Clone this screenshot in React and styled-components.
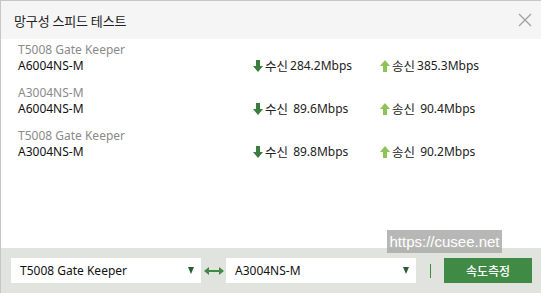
import React from "react";
import styled, { createGlobalStyle } from "styled-components";

const GlobalStyle = createGlobalStyle`
  html, body {
    margin: 0;
    padding: 0;
    background: #ffffff;
  }
  body {
    font-family: "Noto Sans", "Noto Sans CJK KR", sans-serif;
  }
`;

const Dialog = styled.div`
  position: relative;
  width: 541px;
  height: 293px;
  box-sizing: border-box;
  border-top: 1px solid #c6c6c6;
  border-left: 1px solid #c6c6c6;
  display: flex;
  flex-direction: column;
  background: #ffffff;
  overflow: hidden;
`;

const Header = styled.header`
  height: 38px;
  flex: none;
  background: #f5f5f5;
  display: flex;
  align-items: center;
  justify-content: space-between;
  padding: 0 8px 0 13px;
`;

const Title = styled.h1`
  margin: 0;
  font-size: 13px;
  font-weight: 400;
  color: #222;
  font-family: "Noto Sans CJK KR", sans-serif;
  letter-spacing: -0.1px;
`;

const CloseButton = styled.button`
  border: 0;
  background: transparent;
  padding: 0;
  width: 16px;
  height: 16px;
  display: flex;
  cursor: pointer;
`;

const Body = styled.main`
  flex: 1;
  padding: 3px 0 0 17px;
  display: flex;
  flex-direction: column;
  gap: 11px;
`;

const Row = styled.div`
  display: grid;
  grid-template-columns: 235px 127px auto;
  grid-template-rows: 16px 16px;
  font-size: 12px;
  line-height: 16px;
`;

const Source = styled.div`
  grid-column: 1 / 4;
  color: #8a8a8a;
`;

const Target = styled.div`
  color: #111;
`;

const Stat = styled.div`
  display: flex;
  align-items: center;
  gap: 2px;
  color: #222;
  white-space: pre;
`;

const Label = styled.span`
  font-family: "Noto Sans CJK KR", sans-serif;
  font-size: 12.5px;
`;

const Footer = styled.footer`
  height: 45px;
  flex: none;
  background: #e1e3de;
  display: flex;
  align-items: center;
  padding: 0 0 0 10px;
`;

const Select = styled.div`
  width: ${({ $width }) => $width}px;
  height: 25px;
  background: #ffffff;
  box-sizing: border-box;
  padding: 0 7px 0 9px;
  display: flex;
  align-items: center;
  justify-content: space-between;
  font-size: 12px;
  color: #111;
`;

const Caret = styled.span`
  width: 0;
  height: 0;
  border-left: 3.5px solid transparent;
  border-right: 3.5px solid transparent;
  border-top: 7px solid #2f5a36;
`;

const Swap = styled.span`
  width: 25px;
  display: flex;
  justify-content: center;
`;

const Divider = styled.span`
  width: 1px;
  height: 14px;
  background: #3f8a45;
  margin: 0 13px 0 14px;
`;

const MeasureButton = styled.button`
  width: 88px;
  height: 25px;
  border: 0;
  background: #3f8a45;
  color: #ffffff;
  font-size: 12px;
  font-family: "Noto Sans CJK KR", sans-serif;
  font-weight: 500;
  cursor: pointer;
`;

const Watermark = styled.div`
  position: absolute;
  left: 386px;
  top: 229px;
  width: 115px;
  height: 23px;
  background: rgba(170, 172, 168, 0.85);
  color: #ffffff;
  font-family: "Liberation Sans", sans-serif;
  font-size: 15px;
  line-height: 23px;
  text-align: center;
`;

const Arrow = ({ up, color }) => (
  <svg width="10" height="12" viewBox="0 0 10 12">
    {up ? (
      <polygon points="5,0 10,6 7,6 7,12 3,12 3,6 0,6" fill={color} />
    ) : (
      <polygon points="3,0 7,0 7,6 10,6 5,12 0,6 3,6" fill={color} />
    )}
  </svg>
);

const rows = [
  { from: "T5008 Gate Keeper", to: "A6004NS-M", down: "284.2Mbps", up: "385.3Mbps" },
  { from: "A3004NS-M", to: "A6004NS-M", down: " 89.6Mbps", up: " 90.4Mbps" },
  { from: "T5008 Gate Keeper", to: "A3004NS-M", down: " 89.8Mbps", up: " 90.2Mbps" },
];

const App = () => (
  <>
    <GlobalStyle />
    <Dialog>
      <Header>
        <Title>망구성 스피드 테스트</Title>
        <CloseButton aria-label="close">
          <svg width="16" height="16" viewBox="0 0 16 16">
            <path d="M2 2 L14 14 M14 2 L2 14" stroke="#a3a3a3" strokeWidth="1.4" />
          </svg>
        </CloseButton>
      </Header>
      <Body>
        {rows.map((r, i) => (
          <Row key={i}>
            <Source>{r.from}</Source>
            <Target>{r.to}</Target>
            <Stat>
              <Arrow color="#3a7d3e" />
              <Label>수신</Label> {r.down}
            </Stat>
            <Stat>
              <Arrow up color="#8cc45a" />
              <Label>송신</Label> {r.up}
            </Stat>
          </Row>
        ))}
      </Body>
      <Footer>
        <Select $width={190}>
          T5008 Gate Keeper
          <Caret />
        </Select>
        <Swap>
          <svg width="20" height="8" viewBox="0 0 20 8">
            <path d="M3 4 H17" stroke="#3f8a45" strokeWidth="2" />
            <polygon points="0,4 5,0 5,8" fill="#3f8a45" />
            <polygon points="20,4 15,0 15,8" fill="#3f8a45" />
          </svg>
        </Swap>
        <Select $width={190}>
          A3004NS-M
          <Caret />
        </Select>
        <Divider />
        <MeasureButton>속도측정</MeasureButton>
      </Footer>
      <Watermark>https://cusee.net</Watermark>
    </Dialog>
  </>
);

export default App;
